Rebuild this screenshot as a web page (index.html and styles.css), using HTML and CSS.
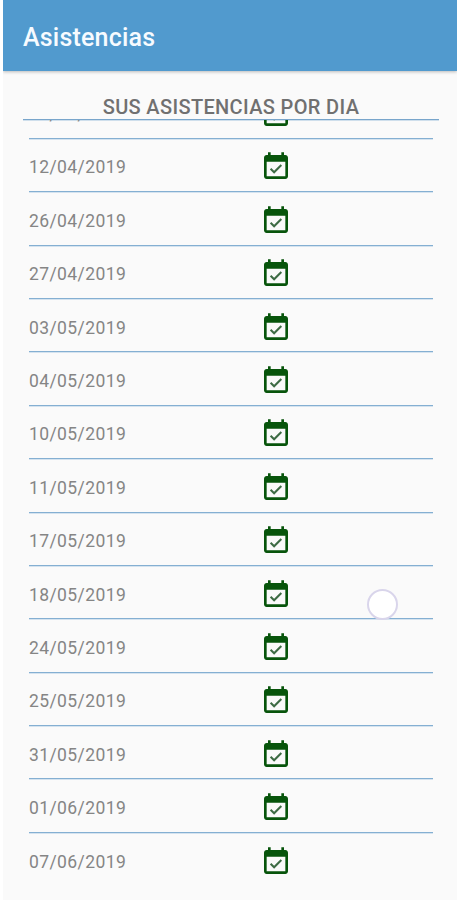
FILE: index.html
```html
<!DOCTYPE html>
<html lang="es">
<head>
  <meta charset="UTF-8">
  <title>Asistencias</title>
  <link rel="stylesheet" href="styles.css">
</head>
<body>

  <!-- Calendar icon used by every row -->
  <svg class="sprite">
    <symbol id="check" viewBox="0 0 24 24">
      <path d="M19 3h-1V1h-2v2H8V1H6v2H5c-1.1 0-2 .9-2 2v14c0 1.1.9 2 2 2h14c1.1 0 2-.9 2-2V5c0-1.1-.9-2-2-2zm0 16H5V8h14v11z"/>
      <path class="tick" d="M16.53 11.06L15.47 10l-4.88 4.88-2.12-2.12-1.06 1.06L10.59 17z"/>
    </symbol>
  </svg>

  <div class="app">
    <header class="toolbar">Asistencias</header>

    <h2 class="title">SUS ASISTENCIAS POR DIA</h2>

    <div class="scroll">
      <ul class="list">
        <li><span>06/04/2019</span><svg><use href="#check"/></svg></li>
        <li><span>12/04/2019</span><svg><use href="#check"/></svg></li>
        <li><span>26/04/2019</span><svg><use href="#check"/></svg></li>
        <li><span>27/04/2019</span><svg><use href="#check"/></svg></li>
        <li><span>03/05/2019</span><svg><use href="#check"/></svg></li>
        <li><span>04/05/2019</span><svg><use href="#check"/></svg></li>
        <li><span>10/05/2019</span><svg><use href="#check"/></svg></li>
        <li><span>11/05/2019</span><svg><use href="#check"/></svg></li>
        <li><span>17/05/2019</span><svg><use href="#check"/></svg></li>
        <li><span>18/05/2019</span><svg><use href="#check"/></svg></li>
        <li><span>24/05/2019</span><svg><use href="#check"/></svg></li>
        <li><span>25/05/2019</span><svg><use href="#check"/></svg></li>
        <li><span>31/05/2019</span><svg><use href="#check"/></svg></li>
        <li><span>01/06/2019</span><svg><use href="#check"/></svg></li>
        <li><span>07/06/2019</span><svg><use href="#check"/></svg></li>
      </ul>
    </div>

    <div class="touch"></div>
  </div>

</body>
</html>
```

FILE: styles.css
```css
body {
  margin: 0;
  background-color: #fff;
  font-family: Roboto, "Liberation Sans", sans-serif;
}

.sprite {
  display: none;
}

.app {
  position: relative;
  display: flex;
  flex-direction: column;
  height: 900px;
  margin-left: 3px;
  background-color: #fafafa;
  overflow: hidden;
}

.toolbar {
  flex: none;
  height: 71px;
  padding-left: 20px;
  line-height: 75px;
  background-color: #519ace;
  color: #f7fbff;
  font-size: 25px;
  font-weight: 500;
  letter-spacing: 0.2px;
  box-shadow: 0 1px 3px rgba(0, 0, 0, 0.25);
}

.title {
  flex: none;
  box-sizing: border-box;
  height: 49px;
  margin: 0 18px 0 20px;
  padding-top: 25px;
  border-bottom: 1px solid #78a5cb;
  box-shadow: 0 1px 0 #cfdfec;
  line-height: 22px;
  text-align: center;
  color: #707070;
  font-size: 20px;
  font-weight: 500;
  letter-spacing: 0.35px;
}

.scroll {
  flex: 1;
  overflow: hidden;
  padding: 0 24px 0 26px;
}

.list {
  list-style: none;
  margin: -34.6px 0 0;
  padding: 0;
}

.list li {
  display: flex;
  align-items: center;
  box-sizing: border-box;
  height: 53.4px;
  border-bottom: 1px solid #84afd2;
  box-shadow: 0 1px 0 #d5e3ef;
  color: #858585;
  font-size: 17.5px;
  letter-spacing: 0.4px;
}

.list li:last-child {
  border-bottom-color: transparent;
  box-shadow: none;
}

.list span {
  width: 231px;
  padding-top: 5px;
}

.list svg {
  width: 32px;
  height: 32px;
  margin-top: 5px;
  fill: #07540b;
}

.tick {
  fill: #3d6b44;
}

/* finger marker over the list */
.touch {
  position: absolute;
  left: 364px;
  top: 589px;
  width: 27px;
  height: 27px;
  border: 2px solid #d9d5eb;
  border-radius: 50%;
  background-color: #fff;
}
```
